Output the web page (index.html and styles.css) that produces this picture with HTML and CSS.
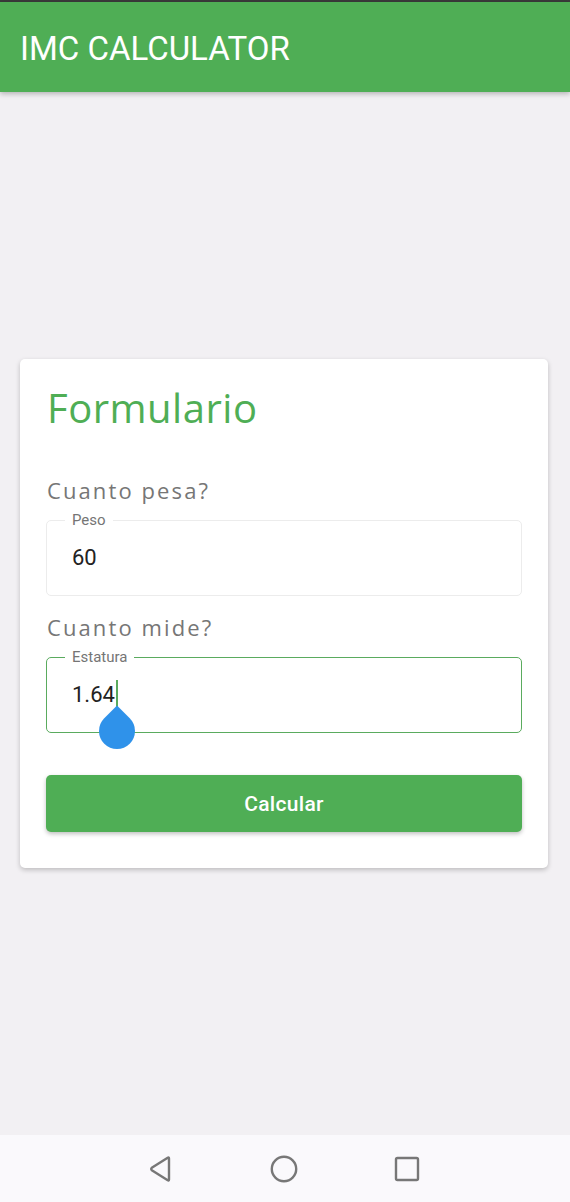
FILE: index.html
```html
<!DOCTYPE html>
<html>
<head>
<meta charset="utf-8">
<link rel="stylesheet" href="styles.css">
</head>
<body>
<div class="screen">
  <div class="status"></div>
  <header class="appbar">IMC CALCULATOR</header>
  <main class="content">
    <section class="card">
      <h1 class="title">Formulario</h1>
      <p class="question q1">Cuanto pesa?</p>
      <div class="field">
        <span class="label">Peso</span>
        <span class="value">60</span>
      </div>
      <p class="question q2">Cuanto mide?</p>
      <div class="field focused">
        <span class="label">Estatura</span>
        <span class="value">1.64<span class="caret"><span class="handle"></span></span></span>
      </div>
      <button class="btn">Calcular</button>
    </section>
  </main>
  <nav class="navbar">
    <svg width="30" height="30" viewBox="0 0 30 30"><path d="M23 4.5 L23 25.5 Q23 27 21.7 26.2 L5.8 16.2 Q4.6 15 5.8 13.8 L21.7 3.8 Q23 3 23 4.5 Z" fill="none" stroke="#777" stroke-width="2.4" stroke-linejoin="round"/></svg>
    <svg width="30" height="30" viewBox="0 0 30 30"><circle cx="15" cy="15" r="12.2" fill="none" stroke="#777" stroke-width="2.4"/></svg>
    <svg width="30" height="30" viewBox="0 0 30 30"><rect x="4" y="4" width="22" height="22" rx="1.5" fill="none" stroke="#777" stroke-width="2.4"/></svg>
  </nav>
</div>
</body>
</html>
```
FILE: styles.css
```css
* { box-sizing: border-box; }
html, body { margin: 0; padding: 0; }
body { font-family: Roboto, "Open Sans", sans-serif; background: #f2f0f3; }
.screen { width: 570px; height: 1202px; display: flex; flex-direction: column; background: #f2f0f3; }
.status { height: 2px; background: #3a3a3a; }
.appbar {
  height: 90px; background: #4fae55; color: #fff;
  font-size: 33px; padding: 29px 0 0 20px; line-height: 36px;
  box-shadow: 0 2px 5px rgba(0,0,0,0.25); position: relative; z-index: 1;
}
.content { flex: 1; display: flex; flex-direction: column; padding: 267px 22px 0 20px; }
.card {
  background: #fff; border-radius: 5px; height: 509px;
  box-shadow: 0 2px 5px rgba(0,0,0,0.22);
  padding: 25px 26px 0 26px; display: flex; flex-direction: column;
}
.title {
  margin: 0 0 0 1px; font-weight: 400; font-size: 40px; line-height: 48px;
  color: #4fae55; letter-spacing: 0.5px; font-family: "Open Sans", sans-serif;
}
.question {
  margin: 0 0 0 1px; color: #767676; font-size: 22px; line-height: 28px;
  letter-spacing: 2.1px; font-family: "Open Sans", sans-serif;
}
.q1 { margin-top: 44px; }
.q2 { margin-top: 17px; }
.field {
  position: relative; height: 76px; border: 1.5px solid #ececec; border-radius: 5px;
  margin-top: 16px; padding: 22px 0 0 25px;
}
.field.focused { border-color: #5aab5e; }
.label {
  position: absolute; left: 18px; top: -10px; background: #fff; padding: 0 7px;
  font-size: 15px; line-height: 18px; color: #757575;
}
.value { position: relative; font-size: 22px; line-height: 30px; color: #222; }
.caret {
  position: absolute; right: -3px; top: -2px; width: 2px; height: 32px; background: #5aab5e;
}
.handle {
  position: absolute; left: -17px; top: 33px; width: 36px; height: 36px;
  background: #2f92ea; border-radius: 0 50% 50% 50%; transform: rotate(45deg);
}
.btn {
  margin-top: 42px; height: 57px; border: none; border-radius: 5px; background: #4fae55;
  color: #fff; font-size: 21px; font-weight: 500; font-family: Roboto, sans-serif;
  letter-spacing: 0.3px;
  box-shadow: 0 2px 4px rgba(0,0,0,0.25);
}
.navbar {
  height: 67px; background: #faf9fc; display: flex; align-items: center;
  justify-content: center; gap: 93px; padding-right: 2px;
}
```
